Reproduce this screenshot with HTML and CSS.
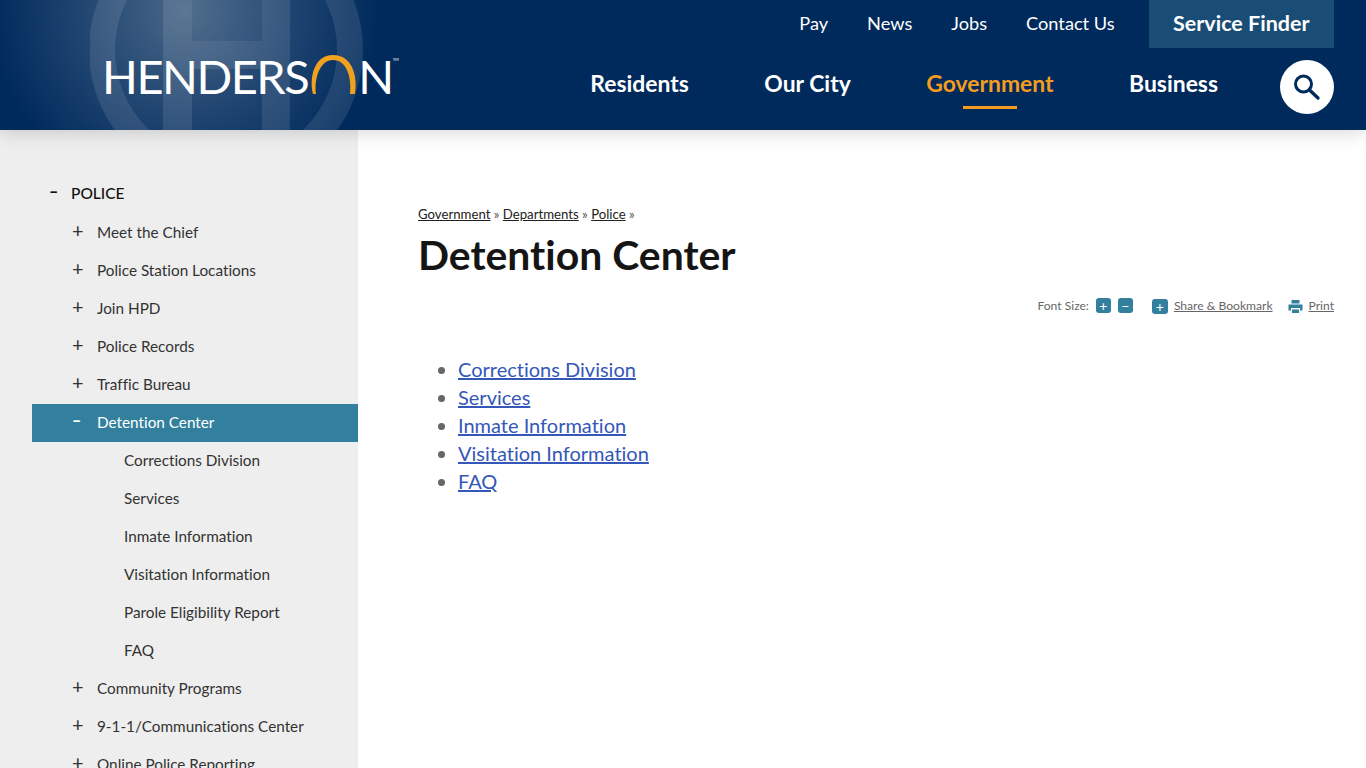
FILE: index.html
```html
<!DOCTYPE html>
<html lang="en">
<head>
  <meta charset="UTF-8">
  <meta name="viewport" content="width=device-width, initial-scale=1.0">
  <title>Detention Center</title>
  <link rel="stylesheet" href="styles.css">
</head>
<body>

<header class="site-header">
  <svg class="watermark" width="300" height="130" viewBox="0 0 300 130">
    <circle cx="136" cy="50" r="124" fill="none" stroke="#fff" stroke-opacity="0.1" stroke-width="26"/>
    <path d="M73 -10h29v140h-29z M172 -10h28v140h-28z" fill="#fff" fill-opacity="0.1"/>
    <path d="M102 41h70v28h-70z" fill="#fff" fill-opacity="0.1"/>
    <path d="M102 -10h70v51h-70z" fill="#fff" fill-opacity="0.04"/>
  </svg>

  <a class="logo" href="#">
    <span>HENDERS</span>
    <svg class="logo-o" width="50" height="40" viewBox="0 0 50 40">
      <path d="M5 39C1 23 6 0 25 0C44 0 50 21 47 39L42 39C44 21 38 5 25 5C12 5 6 23 8 39z" fill="#f0a11f"/>
    </svg>
    <span>N</span>
    <sup>TM</sup>
  </a>

  <div class="header-right">
    <nav class="top-nav">
      <a href="#">Pay</a>
      <a href="#">News</a>
      <a href="#">Jobs</a>
      <a href="#">Contact Us</a>
      <a class="service-finder" href="#">Service Finder</a>
    </nav>
    <div class="main-row">
      <nav class="main-nav">
        <a href="#">Residents</a>
        <a href="#">Our City</a>
        <a class="current" href="#">Government</a>
        <a href="#">Business</a>
      </nav>
      <a class="search-btn" href="#" aria-label="Search">
        <svg width="30" height="30" viewBox="0 0 30 30">
          <circle cx="11.500" cy="12" r="8" fill="none" stroke="#002b5c" stroke-width="3"/>
          <path d="M17.500 18l8.500 8" stroke="#002b5c" stroke-width="3.400" stroke-linecap="round"/>
        </svg>
      </a>
    </div>
  </div>
</header>

<div class="page">
  <aside class="sidebar">
    <ul class="side-nav">
      <li class="top"><span class="mark minus">–</span><a href="#">POLICE</a></li>
      <li><span class="mark">+</span><a href="#">Meet the Chief</a></li>
      <li><span class="mark">+</span><a href="#">Police Station Locations</a></li>
      <li><span class="mark">+</span><a href="#">Join HPD</a></li>
      <li><span class="mark">+</span><a href="#">Police Records</a></li>
      <li><span class="mark">+</span><a href="#">Traffic Bureau</a></li>
      <li class="active"><span class="mark minus">–</span><a href="#">Detention Center</a></li>
      <li class="sub"><a href="#">Corrections Division</a></li>
      <li class="sub"><a href="#">Services</a></li>
      <li class="sub"><a href="#">Inmate Information</a></li>
      <li class="sub"><a href="#">Visitation Information</a></li>
      <li class="sub"><a href="#">Parole Eligibility Report</a></li>
      <li class="sub"><a href="#">FAQ</a></li>
      <li><span class="mark">+</span><a href="#">Community Programs</a></li>
      <li><span class="mark">+</span><a href="#">9-1-1/Communications Center</a></li>
      <li><span class="mark">+</span><a href="#">Online Police Reporting</a></li>
    </ul>
  </aside>

  <main class="content">
    <div class="breadcrumb">
      <a href="#">Government</a> » <a href="#">Departments</a> » <a href="#">Police</a> »
    </div>
    <h1>Detention Center</h1>

    <div class="tools">
      <span class="font-size">Font Size:</span>
      <a class="tool-btn" href="#">+</a>
      <a class="tool-btn minus" href="#">−</a>
      <a class="tool-btn share" href="#">+</a>
      <a class="tool-link" href="#">Share &amp; Bookmark</a>
      <svg class="print-icon" width="15" height="15" viewBox="0 0 15 15">
        <path d="M3.5 1h8v3.5h-8z" fill="#337f9e"/>
        <path d="M0.5 5.500h14v6h-2.500v-2.500h-9v2.500h-2.500z" fill="#337f9e"/>
        <path d="M4 10.500h7v3.500h-7z" fill="#337f9e"/>
      </svg>
      <a class="tool-link" href="#">Print</a>
    </div>

    <ul class="link-list">
      <li><a href="#">Corrections Division</a></li>
      <li><a href="#">Services</a></li>
      <li><a href="#">Inmate Information</a></li>
      <li><a href="#">Visitation Information</a></li>
      <li><a href="#">FAQ</a></li>
    </ul>
  </main>
</div>

</body>
</html>
```

FILE: styles.css
```css
* {
  box-sizing: border-box;
}

body {
  margin: 0;
  height: 768px;
  overflow: hidden;
  font-family: Lato, "Open Sans", sans-serif;
  font-variant-ligatures: none;
  color: #333;
  background-color: #fff;
}

a {
  color: inherit;
}

.site-header {
  position: relative;
  z-index: 2;
  display: flex;
  justify-content: space-between;
  height: 130px;
  padding-right: 32px;
  overflow: hidden;
  background: radial-gradient(circle 195px at 185px 10px, #4a6888 0%, #1f4470 55%, #002a5c 100%);
  box-shadow: 0 0 20px rgba(0, 0, 0, 0.2);
}

.watermark {
  position: absolute;
  left: 90px;
  top: 0;
}

.logo {
  position: relative;
  display: flex;
  align-items: flex-start;
  height: 42px;
  margin: 55px 0 0 102px;
  color: #fff;
  font-size: 47px;
  line-height: 42px;
  font-weight: 400;
  letter-spacing: -1.5px;
  text-decoration: none;
}

.logo sup {
  font-size: 4px;
  line-height: 10px;
  letter-spacing: 0;
}

.header-right {
  position: relative;
  display: flex;
  flex-direction: column;
  align-items: flex-end;
}

.top-nav {
  display: flex;
  align-items: center;
  height: 48px;
  font-size: 18.200px;
  color: #fff;
}

.top-nav a {
  margin-right: 39px;
  padding-bottom: 3px;
  text-decoration: none;
}

.top-nav .service-finder {
  display: block;
  height: 48px;
  margin: 0 0 0 -5px;
  padding: 0 24.500px;
  line-height: 46px;
  font-size: 21.500px;
  font-weight: 700;
  background-color: #1a4d75;
}

.main-row {
  display: flex;
  align-items: center;
  margin-top: 12px;
}

.main-nav {
  display: flex;
  gap: 75.500px;
  margin: -8px 62px 0 0;
  font-size: 22.900px;
  font-weight: 700;
  color: #fff;
}

.main-nav a {
  position: relative;
  text-decoration: none;
}

.main-nav .current {
  color: #f39c1f;
}

.main-nav .current::after {
  content: "";
  position: absolute;
  left: 50%;
  bottom: -12px;
  width: 54px;
  height: 3px;
  margin-left: -27px;
  background-color: #f39c1f;
}

.search-btn {
  display: flex;
  align-items: center;
  justify-content: center;
  width: 54px;
  height: 54px;
  border-radius: 50%;
  background-color: #fff;
}

.page {
  display: flex;
  height: 638px;
}

.sidebar {
  flex: none;
  width: 358px;
  padding: 44px 0 0 32px;
  overflow: hidden;
  background-color: #eee;
}

.side-nav {
  margin: 0;
  padding: 0;
  list-style: none;
  font-size: 15.300px;
  color: #333;
}

.side-nav li {
  display: flex;
  height: 38px;
  padding-left: 40px;
  line-height: 36px;
}

.side-nav a {
  text-decoration: none;
}

.side-nav .mark {
  width: 25px;
  font-size: 20px;
  line-height: 32px;
}

.side-nav .mark.minus {
  font-size: 16px;
  font-weight: 900;
}

.side-nav .top {
  height: 40px;
  padding-left: 17px;
  font-size: 15.500px;
  font-weight: 500;
  line-height: 38px;
  color: #111;
}

.side-nav .top .mark {
  width: 22px;
  line-height: 34px;
}

.side-nav .active {
  background-color: #337f9e;
  color: #fff;
}

.side-nav .sub {
  padding-left: 92px;
}

.content {
  flex: 1;
  min-width: 0;
  padding: 75px 32px 0 60px;
}

.breadcrumb {
  font-size: 13.200px;
  line-height: 18px;
  color: #555;
}

.breadcrumb a {
  color: #222;
}

h1 {
  margin: 7px 0 0;
  font-size: 40.900px;
  line-height: 50px;
  font-weight: 700;
  color: #151515;
}

.tools {
  display: flex;
  align-items: center;
  justify-content: flex-end;
  height: 20px;
  margin-top: 15px;
  font-size: 12.100px;
  color: #666;
}

.font-size {
  margin-right: 7px;
}

.tool-btn {
  display: flex;
  align-items: center;
  justify-content: center;
  width: 15px;
  height: 15px;
  margin-right: 7px;
  border-radius: 3px;
  font-size: 14px;
  color: #fff;
  text-decoration: none;
  background-color: #337f9e;
}

.tool-btn.minus {
  margin-right: 19px;
}

.tool-btn.share {
  margin: 2px 6px 0 0;
  width: 16px;
  height: 15px;
}

.print-icon {
  margin: 2px 6px 0 15px;
}

.link-list {
  margin: 40px 0 0;
  padding-left: 40px;
  font-size: 20px;
  line-height: 28px;
  color: #666;
}

.link-list a {
  color: #3557b7;
}
```
